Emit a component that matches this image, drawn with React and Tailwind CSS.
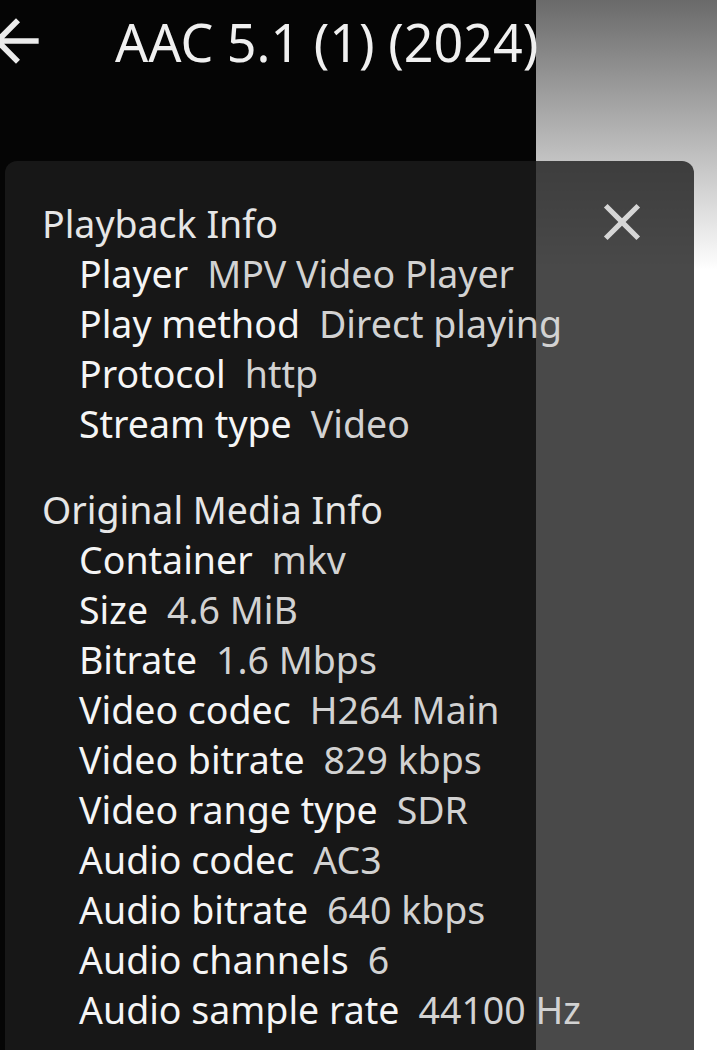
import React from "react";

const sections = [
  {
    title: "Playback Info",
    rows: [
      ["Player", "MPV Video Player"],
      ["Play method", "Direct playing"],
      ["Protocol", "http"],
      ["Stream type", "Video"],
    ],
  },
  {
    title: "Original Media Info",
    rows: [
      ["Container", "mkv"],
      ["Size", "4.6 MiB"],
      ["Bitrate", "1.6 Mbps"],
      ["Video codec", "H264 Main"],
      ["Video bitrate", "829 kbps"],
      ["Video range type", "SDR"],
      ["Audio codec", "AC3"],
      ["Audio bitrate", "640 kbps"],
      ["Audio channels", "6"],
      ["Audio sample rate", "44100 Hz"],
    ],
  },
];

export default function App() {
  return (
    <div
      className="w-[717px] h-[1050px] overflow-hidden flex flex-col bg-[linear-gradient(to_right,#050505_536px,transparent_536px),linear-gradient(to_bottom,#6a6a6a,#ffffff_270px)]"
      style={{ fontFamily: '"Noto Sans", "Open Sans", sans-serif' }}
    >
      <div className="h-[88px] flex items-center shrink-0">
        <svg
          viewBox="0 0 24 24"
          className="w-[68px] h-[68px] -ml-[18px] mt-[-6px] shrink-0"
          fill="#ececec"
        >
          <path d="M20 11H7.83l5.59-5.59L12 4l-8 8 8 8 1.41-1.41L7.83 13H20v-2z" />
        </svg>
        <div className="ml-[65px] text-[52px] leading-none text-[#f0f0f0] whitespace-nowrap -mt-[4px]">
          AAC 5.1 (1) (2024)
        </div>
      </div>
      <div className="relative mt-[73px] ml-[5px] w-[689px] flex-1 rounded-t-[12px] bg-[rgba(28,28,28,0.8)] pt-[38px] pl-[37px]">
        <button className="absolute right-[41px] top-[30px] w-[62px] h-[62px]">
          <svg viewBox="0 0 24 24" className="w-[62px] h-[62px]" fill="#d6d6d6">
            <path d="M19 6.41L17.59 5 12 10.59 6.41 5 5 6.41 10.59 12 5 17.59 6.41 19 12 13.41 17.59 19 19 17.59 13.41 12z" />
          </svg>
        </button>
        <div className="flex flex-col gap-[36px] text-[37.5px] leading-[50px]">
          {sections.map((s) => (
            <div key={s.title} className="flex flex-col">
              <div className="text-[#e6e6e6] whitespace-nowrap">{s.title}</div>
              {s.rows.map(([k, v]) => (
                <div key={k} className="pl-[37px] flex whitespace-nowrap">
                  <span className="text-[#f5f5f5]">{k}</span>
                  <span className="ml-[19px] text-[#d2d2d2]">{v}</span>
                </div>
              ))}
            </div>
          ))}
        </div>
      </div>
    </div>
  );
}
